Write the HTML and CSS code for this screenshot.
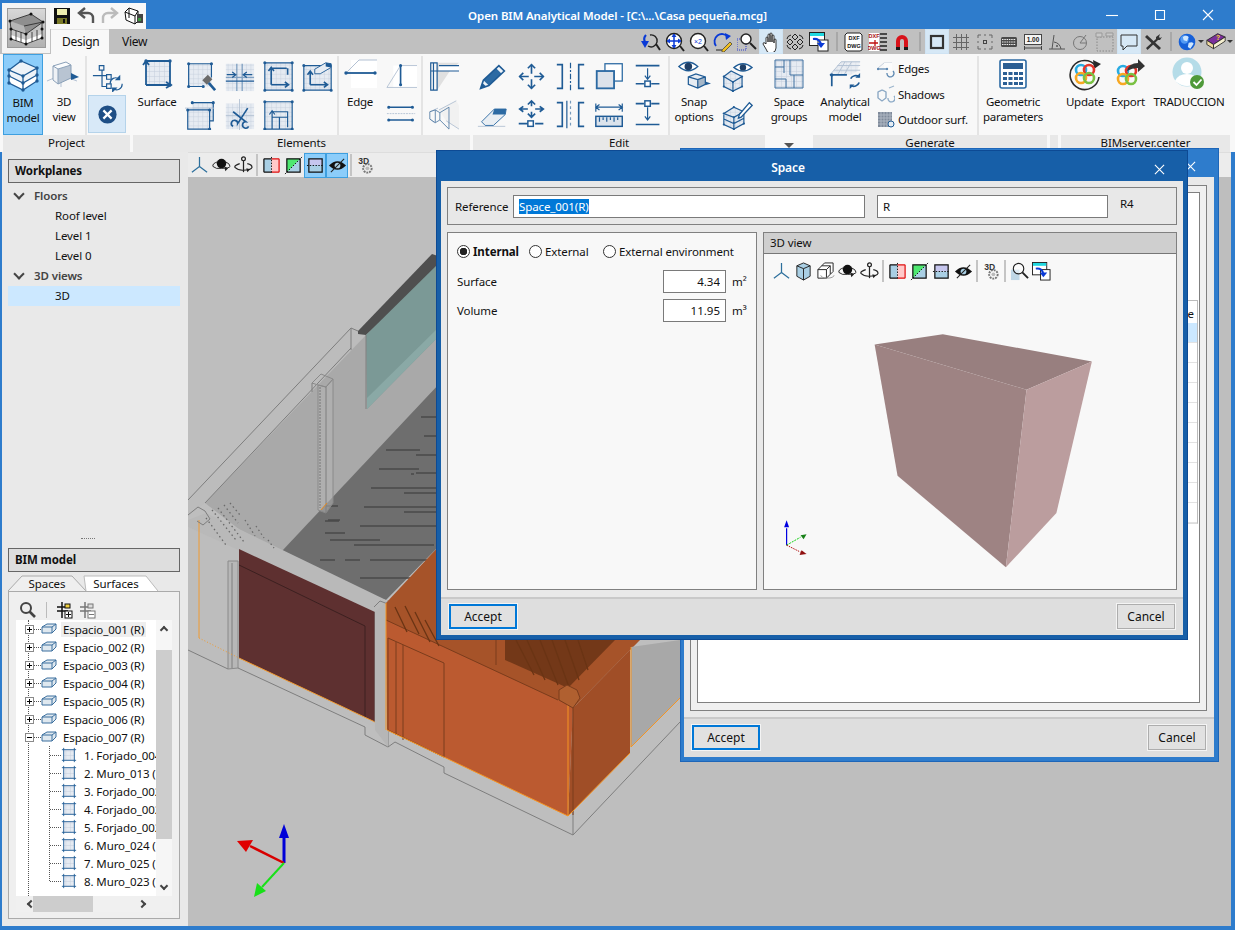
FILE: index.html
```html
<!DOCTYPE html>
<html lang="en">
<head>
    <meta charset="UTF-8">
    <title>Open BIM Analytical Model</title>
    <link rel="stylesheet" href="styles.css">
</head>
<body>
<svg class="sprite" aria-hidden="true">
    <defs>
        <pattern id="pg" width="5" height="5" patternUnits="userSpaceOnUse"><rect width="5" height="5" fill="#e6ebf2"/><path d="M5 0V5M0 5H5" stroke="#c4cedc" fill="none"/></pattern>

        <symbol id="a-house" viewBox="0 0 38 38"><path d="M2 12 23 5 35 13 18 25Z" fill="#8f8f8f"/><path d="M2 12 16 17 18 25 3 20Z" fill="#b5b5b5"/><path d="M3 20 18 25 34 20V29L18 35 3 30Z" fill="#c9c9c9"/><path d="M3 26 18 31 34 25V29L18 35 3 30Z" fill="#fff"/><path d="M2 12 23 5 35 13 18 25 3 20ZM3 20V30L18 35 34 29V14M18 25V35M16 17 35 13M8 22V32M13 23V33M24 23V33M29 21V31" fill="none" stroke="#222" stroke-width=".8"/><path d="M2 12h0M23 5h0M35 13h0M18 25h0M3 20h0M34 20h0M3 30h0M18 35h0M34 29h0" fill="none" stroke="#111" stroke-width="3" stroke-linecap="round"/></symbol>

        <!-- ribbon icons, 34 box -->
        <symbol id="r-bim" viewBox="0 0 34 34"><path d="M3 12 15 3l16 7v13L17 32 3 25Z" fill="#eef3f8"/><path d="M3 18l14 7 14-8v6L17 32 3 25Z" fill="#fff"/><path class="l" d="M3 12 15 3l16 7-14 8ZM3 12v13l14 7 14-9V10M17 18v14M3 18l14 7 14-8"/><path class="n" d="M3 12h0M15 3h0M31 10h0M17 18h0M3 18h0M17 25h0M31 17h0M3 25h0M17 32h0M31 23h0"/></symbol>
        <symbol id="r-3d" viewBox="0 0 34 34"><path class="t" d="M0 24 14 18l16 6M14 30 14 18"/><path d="M6 9 19 5v16l-8 6-5-4Z" fill="#eef1f5"/><path d="M11 12 24 8v13l-13 6Z" fill="#b8c4d2"/><path d="M6 9l5 3 13-4-5-3Z" fill="#fbfcfd"/><path d="M6 9l5 3 13-4-5-3ZM6 9v14l5 4V12M24 8v13l-13 6" fill="none" stroke="#8aa0b8"/><path d="M24 16l8 4-8 3Z" fill="#1f5b95"/></symbol>
        <symbol id="r-tree" viewBox="0 0 34 34"><path class="l" d="M8 5h5v5H8ZM16 15h5v5h-5ZM16 25h5v5h-5ZM1 16h15M11 10v18h5"/><path class="l" d="M20 25a6 6 0 0 1 10-5M33 25a6 6 0 0 1-10 5"/><path class="d" d="M31 15v6h-6ZM22 35v-6h6Z"/></symbol>
        <symbol id="r-close" viewBox="0 0 34 34"><circle cx="17" cy="17" r="10" fill="#1f4f86"/><path d="M12.500 12.500l9 9M21.500 12.500l-9 9" stroke="#fff" stroke-width="2.400" fill="none"/></symbol>
        <symbol id="r-surface" viewBox="0 0 34 34"><rect x="6" y="4" width="24" height="24" fill="url(#pg)"/><path class="l2" d="M6 28V4H30V28H6M3 8l3-4 3 4M26 25l5 3-5 3"/><path class="n" d="M6 4h0M30 4h0M30 28h0"/></symbol>
        <symbol id="r-paint" viewBox="0 0 34 34"><rect x="4" y="3" width="25" height="25" fill="url(#pg)"/><path class="l" d="M4 28V3H29V18M4 28H20"/><path class="n" d="M4 3h0M29 3h0M4 28h0M20 28h0"/><path d="M19 21l6-6 5 5-6 6Z" fill="#6b6b6b"/><path d="M26 24l7 8" stroke="#1f5b95" stroke-width="3" fill="none"/></symbol>
        <symbol id="r-merge" viewBox="0 0 34 34"><rect x="2" y="3" width="31" height="30" fill="url(#pg)"/><path class="l" d="M14 3v30M20 3v30M2 18h31" opacity=".5"/><path class="l" d="M3 15h9M9 12l4 3-4 3M31 15h-9M25 12l-4 3 4 3M2 22h31"/></symbol>
        <symbol id="r-inner" viewBox="0 0 34 34"><rect x="2" y="2" width="30" height="30" fill="url(#pg)"/><path class="l" d="M2 2H32V32H2Z"/><path class="l2" d="M9 26V8H26M9 26h18M6 11l3-4 3 4M24 23l4 3-4 3M27 8v7"/><path class="n" d="M2 2h0M32 2h0M32 32h0M2 32h0"/></symbol>
        <symbol id="r-inner2" viewBox="0 0 34 34"><rect x="2" y="5" width="30" height="27" fill="url(#pg)"/><path class="l" d="M2 5H32V32H2Z"/><path class="l2" d="M9 26V12M9 26h18M6 15l3-4 3 4M24 23l4 3-4 3"/><path d="M14 9 26 2l6 1v4L20 14h-6Z" fill="#e8edf3" stroke="#1f5b95"/><path d="M26 2l6 1v4l-6-1Z" fill="#1f5b95"/><path class="n" d="M2 5h0M32 32h0M2 32h0"/></symbol>
        <symbol id="r-copy" viewBox="0 0 34 34"><rect x="3" y="12" width="24" height="21" fill="url(#pg)"/><rect x="8" y="4" width="23" height="20" fill="url(#pg)"/><path class="l" d="M8 4h23v20H27M3 12h24v21H3Z"/><path class="t" d="M0 10h32"/><path class="n" d="M8 4h0M31 4h0M3 12h0M27 12h0M27 33h0"/></symbol>
        <symbol id="r-cut" viewBox="0 0 34 34"><rect x="2" y="5" width="31" height="28" fill="url(#pg)"/><path class="t" d="M17 0v34M2 18h31"/><path class="l2" d="M10 14l14 11a3.500 3.500 0 1 0 3 5M26 10 15 27a3.500 3.500 0 1 0-5 3"/></symbol>
        <symbol id="r-door" viewBox="0 0 34 34"><rect x="2" y="3" width="30" height="30" fill="url(#pg)"/><path class="l" d="M2 3H32V33H2Z"/><path class="l" d="M10 33V14H27V31M10 20H27M18 20V33"/><path class="l" d="M7 17l3-4 3 4"/><path class="n" d="M2 3h0M32 3h0M32 33h0M2 33h0"/></symbol>
        <symbol id="r-edge" viewBox="0 0 34 34"><rect x="8" y="3" width="26" height="28" fill="#fff"/><path class="t" d="M3 16 16 3h18"/><path class="l2" d="M3 16h29"/><path class="n" d="M3 16h0M32 16h0"/></symbol>
        <symbol id="r-edge2" viewBox="0 0 34 34"><rect x="8" y="5" width="26" height="24" fill="#fff"/><path class="t" d="M1 29 16 5h18M1 29h33"/><path class="l2" d="M16 5V26"/><path class="n" d="M16 5h0M16 26h0"/></symbol>
        <symbol id="r-edge3" viewBox="0 0 34 34"><path class="l2" d="M3 9H29M3 23H29"/><path class="n" d="M3 9h0M29 9h0M3 23h0M29 23h0"/><path class="t" d="M1 16H32" stroke-dasharray="2 1"/></symbol>
        <symbol id="r-wall" viewBox="0 0 34 34"><path d="M10 2h24L24 11 10 32Z" fill="#e0e0e0"/><path d="M12 5h22v6H12Z" fill="#fff"/><path class="l" d="M3 2h7v30H3ZM6 2v30M3 11h31M12 5h22"/></symbol>
        <symbol id="r-win" viewBox="0 0 34 34"><path d="M12 12 31 2l3 5v26L20 24Z" fill="#f1f1f1"/><path class="t" d="M2 14l9-4M2 22l5 4M12 12l19-10M20 24l14 9"/><path d="M2 14l6-2 5 3v8l-5 3-6-4ZM8 12v14M13 15l10-6v24L13 23" fill="none" stroke="#5b82a8"/></symbol>

        <symbol id="e-pencil" viewBox="0 0 34 34"><path d="M4 30l3-9L24 5l6 6-17 16Z" fill="#eef3f8"/><path d="M21 8l6 6-14 13-6-6Z" fill="#2c6aa3"/><path class="l2" d="M4 30l3-9L24 5l6 6-17 16Z"/><path class="d" d="M4 30l2-6 4 4Z"/></symbol>
        <symbol id="e-move" viewBox="0 0 34 34"><path class="l2" d="M17 4v10M17 20v10M4 17h10M20 17h10"/><path class="l2" d="M13 8l4-4 4 4M13 26l4 4 4-4M8 13l-4 4 4 4M26 13l4 4-4 4"/></symbol>
        <symbol id="e-mirror" viewBox="0 0 34 34"><path class="l2" d="M2 4h6v26H2M32 4h-6v26h6"/><path class="l" d="M17 2v30" stroke-dasharray="6 2 2 2"/></symbol>
        <symbol id="e-copy" viewBox="0 0 34 34"><rect x="12" y="3" width="19" height="19" fill="#fff" stroke="#2c6aa3" stroke-width="1.400"/><rect x="3" y="11" width="19" height="19" fill="#dce2ea" stroke="#2c6aa3" stroke-width="2"/></symbol>
        <symbol id="e-align" viewBox="0 0 34 34"><path class="l2" d="M3 5h26M3 25h9M20 25h9"/><path class="l" d="M16 8v12M13 16l3 4 3-4"/><rect x="13" y="22" width="6" height="6" fill="#fff" stroke="#1f5b95" stroke-width="1.600"/></symbol>
        <symbol id="e-eraser" viewBox="0 0 34 34"><path class="t" d="M1 30h30" stroke-width="3"/><path d="M5 25 19 11h13l-1 6-13 12H9Z" fill="#e9eef3" stroke="#2c6aa3"/><path d="M19 11h13l-1 6H17Z" fill="#2c6aa3"/></symbol>
        <symbol id="e-move2" viewBox="0 0 34 34"><path class="l2" d="M17 3v5M17 14v5M5 11h8M21 11h8M13 6l4-4 4 4M13 16l4 4 4-4M8 8l-4 3 4 3M26 8l4 3-4 3M3 27h10M21 27h9"/><rect x="13" y="24" width="6" height="6" fill="#fff" stroke="#1f5b95" stroke-width="1.600"/></symbol>
        <symbol id="e-mirror2" viewBox="0 0 34 34"><path class="l2" d="M2 4h6v26H2M32 4h-6v26h6"/><path class="l" d="M17 2v30" stroke-dasharray="3 3" opacity=".6"/><path class="l" d="M13 2v30"/></symbol>
        <symbol id="e-ruler" viewBox="0 0 34 34"><path class="l" d="M2 5v9M31 5v9M2 9h29M6 6l-4 3 4 3M27 6l4 3-4 3"/><rect x="2" y="19" width="29" height="11" fill="#dbe3ec" stroke="#1f5b95" stroke-width="1.600"/><path class="l" d="M6 20v5M10 20v3M14 20v5M18 20v3M22 20v5M26 20v3"/></symbol>
        <symbol id="e-align2" viewBox="0 0 34 34"><path class="l2" d="M3 5h9M20 5h9M3 28h26"/><path class="l" d="M16 9v14M13 19l3 4 3-4"/><rect x="13" y="2" width="6" height="6" fill="#fff" stroke="#1f5b95" stroke-width="1.600"/></symbol>

        <symbol id="s-eyecube" viewBox="0 0 36 34"><path d="M2 9q10-9 20 0-10 9-20 0Z" fill="#fff" stroke="#1f5b95" stroke-width="1.400"/><circle cx="12" cy="9" r="4" fill="#1f3f66"/><path d="M12 20l8-3 10 3v8l-8 4-10-4Z" fill="#e7ecf2"/><path d="M22 23l8-3v8l-8 4Z" fill="#a6b7c8"/><path class="l" d="M12 20l10 3 8-3M22 23v9M12 20v8l10 4 8-4v-8l-10-3Z"/><path class="d" d="M30 25l6 2-6 2Z"/></symbol>
        <symbol id="s-eyehouse" viewBox="0 0 34 34"><path d="M13 7q10-8 20 0-10 8-20 0Z" fill="#fff" stroke="#1f5b95" stroke-width="1.400"/><circle cx="23" cy="7" r="3.500" fill="#1f3f66"/><path d="M2 17l8-6 12 6v11l-10 5-10-5Z" fill="url(#pg)"/><path class="l" d="M2 17l8-6 12 6-10 6ZM2 17v11l10 5 10-5V17M12 23v10"/><path class="n1" d="M2 17h0M22 17h0M12 23h0M2 28h0M12 33h0M22 28h0"/></symbol>
        <symbol id="s-penhouse" viewBox="0 0 34 34"><path d="M2 16l11-7 11 5v13l-11 6-11-5Z" fill="url(#pg)"/><path class="l" d="M2 16l11-7 11 5-11 6ZM2 16v12l11 5 11-6V14M13 20v13M2 22l11 5 11-6"/><path class="n1" d="M2 16h0M13 9h0M24 14h0M13 20h0M2 28h0M13 33h0M24 27h0"/><path d="M19 17 30 4l3 3-12 13-3 1Z" fill="#fff" stroke="#1f5b95" stroke-width="1.500"/></symbol>
        <symbol id="s-plan" viewBox="0 0 34 34"><rect x="3" y="3" width="28" height="28" fill="url(#pg)"/><path d="M3 3H31V31H3ZM3 10h9V3M3 22h11v9M12 10v6M18 3v15h13M22 18v13" fill="none" stroke="#3c6f9f"/></symbol>
        <symbol id="s-ana" viewBox="0 0 36 34"><path d="M2 18 14 4h20l-3 10-7 4Z" fill="url(#pg)" opacity=".7"/><path class="t" d="M2 18 14 4h20M6 13h28M10 8h24M18 4 10 18M25 4 17 18"/><path class="l2" d="M2 18h18M4 18v12"/><path class="n" d="M4 18h0"/><path class="l2" d="M24 22a6 6 0 0 1 9-2M33 26a6 6 0 0 1-9 3"/><path class="d" d="M34 16v5h-5ZM23 33v-5h5Z"/></symbol>
        <symbol id="m-edges" viewBox="0 0 18 18" opacity=".7"><path class="t" d="M1 8l6-5h8"/><path d="M7 3h8v8H7Z" fill="#fff"/><path class="l" d="M1 9h9"/><path class="n1" d="M1 9h0M10 9h0"/><path class="l" d="M10 13a3.500 3.500 0 1 0 6-2"/></symbol>
        <symbol id="m-shadow" viewBox="0 0 18 18" opacity=".7"><path class="t" d="M1 7l5-2 3 2v6l-4 3-4-3Z"/><path class="l" d="M5 5l4 2v6l-4 3-4-3V7ZM12 3l5-2" opacity=".6"/><path class="l" d="M11 13a3.500 3.500 0 1 0 6-2" opacity=".7"/></symbol>
        <symbol id="m-out" viewBox="0 0 18 18"><rect x="1" y="1" width="14" height="15" fill="#7f8a9a"/><path d="M1 4h14M1 7h14M1 10h14M1 13h14M4 1v15M7 1v15M10 1v15M13 1v15" stroke="#aeb6c2" fill="none"/><circle cx="14" cy="13" r="3" fill="#e6edf4" stroke="#1f5b95"/></symbol>
        <symbol id="r-calc" viewBox="0 0 34 34"><rect x="4" y="3" width="26" height="28" rx="2" fill="#fff" stroke="#2c6aa3" stroke-width="1.600"/><rect x="7" y="6" width="20" height="6" fill="#2c5f94"/><path d="M7 15h4v3H7ZM12.500 15h4v3h-4ZM18 15h4v3h-4ZM23 15h4v3h-4ZM7 20h4v3H7ZM12.500 20h4v3h-4ZM18 20h4v3h-4ZM23 20h4v3h-4ZM7 25h4v3H7ZM12.500 25h4v3h-4ZM18 25h4v3h-4ZM23 25h4v3h-4Z" fill="#2c5f94"/></symbol>
        <g id="rings" fill="none" stroke-width="2.600"><circle cx="12" cy="11" r="5" stroke="#29abe2"/><circle cx="20" cy="11" r="5" stroke="#e6352b"/><circle cx="12" cy="19" r="5" stroke="#f7a823"/><circle cx="20" cy="19" r="5" stroke="#7ac143"/></g>
        <symbol id="b-update" viewBox="0 0 34 34"><path d="M28 9A14.500 14.500 0 1 0 31 20" fill="none" stroke="#2a2a2a" stroke-width="1.600"/><path d="M25 3l8 4-7 5Z" fill="#2a2a2a"/><use href="#rings" transform="translate(1 2)"/></symbol>
        <symbol id="b-export" viewBox="0 0 34 34"><use href="#rings" transform="translate(0 3)"/><path d="M16 14q2-8 11-8V2l7 7-7 6v-4q-6 0-11 3Z" fill="#333"/></symbol>
        <symbol id="b-user" viewBox="0 0 34 34"><circle cx="15" cy="15" r="14.500" fill="#b5dce8"/><circle cx="15" cy="11" r="6" fill="#fff"/><path d="M3 24q3-7 12-7t11 7q-5 5-11 5t-12-5Z" fill="#fff"/><circle cx="25" cy="25" r="7" fill="#4f9a3a"/><path d="M21.500 25l3 3 5-5.500" fill="none" stroke="#fff" stroke-width="1.800"/></symbol>

        <!-- toolbar icons, 20 box -->
        <symbol id="t-zprev" viewBox="0 0 20 20"><path d="M9 3a6 6 0 1 1-2 11" fill="none" stroke="#222" stroke-width="1.400"/><path d="M15 12l4 6" stroke="#222" stroke-width="2"/><path d="M5 3a6 6 0 0 0-1 7" fill="none" stroke="#0a3ad6" stroke-width="2.200"/><path d="M0 9h8l-4 7Z" fill="#0a3ad6"/></symbol>
        <symbol id="t-zall" viewBox="0 0 20 20"><circle cx="9" cy="9" r="7.500" fill="#fff" stroke="#222" stroke-width="1.400"/><path d="M15 14l4 5" stroke="#222" stroke-width="2"/><path d="M9 4v10M4 9h10" stroke="#0a3ad6" stroke-width="1.500"/><path d="M7 5l2-3 2 3M7 13l2 3 2-3M5 7 2 9l3 2M13 7l3 2-3 2" fill="#0a3ad6" stroke="#0a3ad6"/></symbol>
        <symbol id="t-zx2" viewBox="0 0 20 20"><circle cx="9" cy="9" r="7.500" fill="#fff" stroke="#222" stroke-width="1.400"/><path d="M15 14l4 5" stroke="#222" stroke-width="2"/><text x="9" y="12" class="tiny-b">×2</text></symbol>
        <symbol id="t-zred" viewBox="0 0 20 20"><path d="M3 14A7 7 0 1 1 15 5" fill="none" stroke="#0a3ad6" stroke-width="1.800"/><path d="M12 1l6 3-5 4Z" fill="#0a3ad6"/><path d="M9 18l8-8 2 2-8 8h-2Z" fill="#f0c020" stroke="#333" stroke-width=".7"/><path d="M3 18h6" stroke="#222"/></symbol>
        <symbol id="t-zwin" viewBox="0 0 20 20"><path d="M0 7h9v11H0Z" fill="none" stroke="#2a3ad0" stroke-dasharray="1 1"/><circle cx="9" cy="7" r="5" fill="#fff" stroke="#222" stroke-width="1.400"/><path d="M13 11l6 6" stroke="#222" stroke-width="2"/></symbol>
        <symbol id="t-hand" viewBox="0 0 20 20"><path d="M5 12V6a1 1 0 0 1 2 0v4-7a1 1 0 0 1 2 0v7-8a1 1 0 0 1 2 0v8-6a1 1 0 0 1 2 0v7-3a1 1 0 0 1 2 0v8q0 4-4 5H9q-3 0-4-4l-3-5q0-2 2-1Z" fill="#fff" stroke="#222" stroke-width=".9"/></symbol>
        <symbol id="t-orbit" viewBox="0 0 20 20"><path d="M10 2l3 3-3 3-3-3ZM10 12l3 3-3 3-3-3ZM2 10l3-3 3 3-3 3ZM18 10l-3-3-3 3 3 3Z" fill="none" stroke="#222"/><path d="M6 3Q2 4 2 7M14 3q4 1 4 4M2 13q0 3 4 4M18 13q0 3-4 4" stroke="#222" fill="none"/></symbol>
        <symbol id="t-winarrow" viewBox="0 0 20 20"><rect x=".5" y=".5" width="15" height="13" fill="#fff" stroke="#222"/><rect x="1" y="1" width="14" height="3" fill="#1fd8e0"/><rect x="9" y="8" width="10" height="11" fill="#fff" stroke="#222"/><path d="M4 7q7-1 8 6" stroke="#0a3ad6" stroke-width="2" fill="none"/><path d="M8 11h8l-4 5Z" fill="#0a3ad6"/></symbol>
        <symbol id="t-dxf" viewBox="0 0 20 20"><path d="M3 1h13l2 2v15l-2 1H3l-2-2V3Z" fill="#fff" stroke="#222"/><text x="10" y="8" class="tiny">DXF</text><text x="10" y="16" class="tiny">DWG</text></symbol>
        <symbol id="t-dxf2" viewBox="0 0 20 20"><path d="M1 1h10v18H1Z" fill="#fff"/><text x="6" y="6" class="tiny red">DXF</text><text x="6" y="18" class="tiny red">DWG</text><path d="M1 11h9M7 8v6" stroke="#c01010" stroke-width="1.300"/><path d="M12 2h7M12 6h7M12 10h7M12 14h7M12 18h7" stroke="#222" stroke-width="1.400"/></symbol>
        <symbol id="t-magnet" viewBox="0 0 20 20"><path d="M4 18V9a6 6 0 0 1 12 0v9h-4V9a2 2 0 0 0-4 0v9Z" fill="#d8121a"/><path d="M4 15h4v3H4ZM12 15h4v3h-4Z" fill="#1a1a1a"/></symbol>
        <symbol id="t-square" viewBox="0 0 20 20"><rect x="4" y="4" width="12" height="12" fill="none" stroke="#333" stroke-width="2.200"/></symbol>
        <symbol id="t-grid" viewBox="0 0 20 20"><path d="M5.500 2v16M10.500 2v16M15.500 2v16M2 5.500h16M2 10.500h16M2 15.500h16" stroke="#666" fill="none"/></symbol>
        <symbol id="t-dots" viewBox="0 0 20 20"><path d="M3 3h3M14 3h3M3 17h3M14 17h3M3 3v3M3 14v3M17 3v3M17 14v3M9 3h2M9 17h2M3 9v2M17 9v2" stroke="#666" fill="none"/><rect x="8.500" y="8.500" width="3" height="3" fill="none" stroke="#444"/></symbol>
        <symbol id="t-keys" viewBox="0 0 20 20"><rect x="2" y="5" width="16" height="10" rx="1.500" fill="#4a4a4a"/><path d="M3 7.500h14M3 10h14M3 12.500h14" stroke="#eee" stroke-dasharray="1.500 .8" fill="none"/></symbol>
        <symbol id="t-num" viewBox="0 0 20 20"><rect x="1.500" y="2.500" width="17" height="10" fill="#f4f4f4" stroke="#444"/><text x="10" y="10" class="tiny-n">1.00</text><path d="M1.500 14v4M18.500 14v4M1.500 16h17" stroke="#444" fill="none"/></symbol>
        <symbol id="t-angle" viewBox="0 0 20 20"><path d="M2 17h16M5 17 7 3M7 10q6 1 7 7" stroke="#555" fill="none"/><circle cx="10" cy="14" r="1" fill="#555"/></symbol>
        <symbol id="t-circ" viewBox="0 0 20 20"><circle cx="9" cy="11" r="6.500" fill="none" stroke="#777"/><path d="M9 11h6M9 11l6-8" stroke="#777" fill="none"/></symbol>
        <symbol id="t-dash" viewBox="0 0 20 20"><path d="M2 5h16v14H2Z" fill="none" stroke="#888" stroke-dasharray="1.500 1.500"/><path d="M1 1h6v4H1ZM11 1h7v3h-7Z" fill="#c8c8c8" stroke="#999"/></symbol>
        <symbol id="t-bubble" viewBox="0 0 20 20"><path d="M2 3h16v11H8l-4 4v-4H2Z" fill="none" stroke="#333"/></symbol>
        <symbol id="t-tools" viewBox="0 0 20 20"><path d="M4 3l14 13-2 2L2 5Z" fill="#333"/><path d="M17 2l-4 3v2l-10 9 1.500 2L15 8h2l2-3-2 1-1-1Z" fill="#333"/></symbol>
        <symbol id="t-globe" viewBox="0 0 24 24"><circle cx="12" cy="12" r="10" fill="#1660d8"/><circle cx="9" cy="9" r="5" fill="#6db4ff" opacity=".7"/><path d="M7 6q4-3 7 0l-2 5-4-1ZM14 13q5-2 6 1l-4 6-3-2Z" fill="#cfe7ff"/></symbol>
        <symbol id="t-book" viewBox="0 0 24 24"><path d="M1 10 14 2l9 4-14 9Z" fill="#7a2f9c" stroke="#222"/><path d="M1 10l8 5v5l-8-5Z" fill="#f0d9a0" stroke="#222"/><path d="M9 20l14-9V6L9 15Z" fill="#f6f0d0" stroke="#222"/><text x="12" y="10" class="tiny-y">?</text></symbol>

        <symbol id="q-save" viewBox="0 0 20 20"><path d="M2 2h16v16H2Z" fill="#111"/><rect x="5" y="3" width="10" height="6" fill="#f0f0b0"/><rect x="5" y="12" width="10" height="6" fill="#7a7a28"/><rect x="11" y="13" width="2" height="4" fill="#111"/></symbol>
        <symbol id="q-undo" viewBox="0 0 20 20"><path d="M4 7h8a5 5 0 0 1 5 5v5" fill="none" stroke="#555" stroke-width="2.400"/><path d="M9 2 3 7l6 5" fill="none" stroke="#555" stroke-width="2.400"/></symbol>
        <symbol id="q-redo" viewBox="0 0 20 20"><path d="M16 7H8a5 5 0 0 0-5 5v5" fill="none" stroke="#bbb" stroke-width="2.400"/><path d="M11 2l6 5-6 5" fill="none" stroke="#bbb" stroke-width="2.400"/></symbol>
        <symbol id="q-print" viewBox="0 0 20 20"><path d="M1 6l4-4 9 3v10l-3 3-9-4Z" fill="#fff" stroke="#111"/><path d="M5 2v10M1 6l10 4v8M11 10l3-5" stroke="#111" fill="none"/><path d="M13 8h6v9h-6Z" fill="#444"/><rect x="14" y="12" width="3" height="3" fill="#3c9a3c"/></symbol>

        <!-- view toolbar -->
        <symbol id="v-axes" viewBox="0 0 20 20"><path d="M10 1v10L2 17M10 11l8 6" stroke="#2c6f9c" stroke-width="1.300" fill="none"/></symbol>
        <symbol id="v-cube" viewBox="0 0 20 20"><path d="M3 4l7-3 7 3v11l-7 4-7-4Z" fill="#a9cfe4" stroke="#222"/><path d="M3 4l7 3 7-3M10 7v12" stroke="#222" fill="none"/></symbol>
        <symbol id="v-cubes" viewBox="0 0 20 20"><path d="M6 4l3-3h9v9l-3 3H6Z" fill="#fff" stroke="#222"/><path d="M2 8l4-4h9v9l-4 4H2Z" fill="#fff" stroke="#222"/><path d="M2 8h9v9M11 8l4-4" stroke="#222" fill="none"/><path d="M5 14a7 3 0 0 0 14 0" fill="none" stroke="#999"/></symbol>
        <symbol id="v-orbit" viewBox="0 0 20 20"><circle cx="10" cy="8" r="5" fill="#111"/><path d="M6 6Q0 8 1 11q3 3 9 2 8 0 9-2 0-3-5-5" fill="none" stroke="#222"/><path d="M13 11l4 2-3 3Z" fill="#222"/></symbol>
        <symbol id="v-orbit2" viewBox="0 0 20 20"><circle cx="10" cy="3" r="2" fill="none" stroke="#222" stroke-width="1.300"/><path d="M10 5v12" stroke="#222" stroke-width="1.300"/><path d="M6 8Q0 10 1 12q3 3 8 3 9 0 10-3 0-3-5-4" fill="none" stroke="#222" stroke-width="1.200"/><path d="M13 13l4 1-3 3Z" fill="#222"/></symbol>
        <symbol id="v-clipx" viewBox="0 0 20 20"><rect x="2" y="3" width="8" height="14" fill="#a9cfe4"/><rect x="10" y="3" width="8" height="14" fill="#ffc9c9"/><path d="M2 3v14M2 3h8M2 17h8" stroke="#111" stroke-width="1.300" fill="none"/><path d="M18 3v14M10 3h8M10 17h8" stroke="#e01010" stroke-width="1.300" fill="none"/><path d="M10 1v18" stroke="#111" stroke-dasharray="1.500 1.500"/></symbol>
        <symbol id="v-clipy" viewBox="0 0 20 20"><rect x="3" y="3" width="14" height="14" fill="#a9cfe4"/><path d="M3 3h14L3 17Z" fill="#4ee870"/><path d="M3 3h14v14H3Z" stroke="#111" stroke-width="1.300" fill="none"/><path d="M1 19 19 1" stroke="#111" stroke-dasharray="1.500 1.500"/></symbol>
        <symbol id="v-clipz" viewBox="0 0 20 20"><rect x="3" y="3" width="14" height="7" fill="#c6c6ee"/><rect x="3" y="10" width="14" height="7" fill="#a9cfe4"/><path d="M3 3h14v14H3Z" stroke="#111" stroke-width="1.300" fill="none"/><path d="M1 10h18" stroke="#111" stroke-dasharray="1.500 1.500"/></symbol>
        <symbol id="v-eye" viewBox="0 0 20 20"><path d="M1 10q9-9 18 0-9 9-18 0Z" fill="#111"/><circle cx="10" cy="10" r="3" fill="#a9cfe4"/><path d="M3 17 17 3" stroke="#222" stroke-width="1.100"/></symbol>
        <symbol id="v-3d" viewBox="0 0 20 20"><text x="8" y="8.500" class="tiny-3">3D</text><circle cx="12" cy="13" r="4.500" fill="none" stroke="#777" stroke-width="2" stroke-dasharray="2 1"/><circle cx="12" cy="13" r="2" fill="#bbb"/></symbol>
        <symbol id="v-zoom" viewBox="0 0 20 20"><rect x="1" y="8" width="9" height="11" fill="#bfd7e6"/><circle cx="9" cy="7" r="5.500" fill="#fff" fill-opacity=".5" stroke="#222" stroke-width="1.200"/><path d="M13 11l6 6" stroke="#222" stroke-width="2"/></symbol>

        <symbol id="space" viewBox="0 0 16 16"><path d="M1 6l5-3h9v5l-4 4H1Z" fill="#dfe8ef" stroke="#3b6f9e"/><path d="M1 6h10v6M11 6l4-3" fill="none" stroke="#3b6f9e"/></symbol>
        <symbol id="wallico" viewBox="0 0 16 18"><rect x="2" y="3" width="12" height="12" fill="url(#pg)"/><path d="M2 1v16M14 1v16M0 3h16M0 15h16" stroke="#1f5b95" fill="none"/></symbol>
        <symbol id="zoom" viewBox="0 0 18 18"><circle cx="7" cy="7" r="5" fill="none" stroke="#444" stroke-width="2"/><path d="M10.500 10.500 16 16" stroke="#444" stroke-width="2.600"/></symbol>
        <symbol id="plus1" viewBox="0 0 18 18"><path d="M6 1v16M1 6h11M1 10h11" stroke="#111" stroke-width="1.500" fill="none"/><rect x="9" y="3" width="5" height="4" fill="#f0d040" stroke="#111"/><rect x="9" y="10" width="7" height="7" fill="#fff" stroke="#111"/><path d="M12.500 11v5M10 13.500h5" stroke="#111"/></symbol>
        <symbol id="plus2" viewBox="0 0 18 18"><path d="M6 1v16M1 6h11M1 10h11" stroke="#777" stroke-width="1.500" fill="none"/><rect x="9" y="3" width="5" height="4" fill="#ddd" stroke="#777"/><rect x="9" y="10" width="7" height="7" fill="#fff" stroke="#777"/><path d="M10 13.500h5" stroke="#777"/></symbol>
    </defs>
</svg>

<div class="app">
    <div class="app-button"><div class="app-logo"><svg class="i38"><use href="#a-house"/></svg></div></div>

    <header class="titlebar">
        <div class="qat">
            <svg class="i20"><use href="#q-save"/></svg>
            <svg class="i20"><use href="#q-undo"/></svg>
            <svg class="i20"><use href="#q-redo"/></svg>
            <svg class="i20"><use href="#q-print"/></svg>
        </div>
        <div class="title">Open BIM Analytical Model - [C:\...\Casa pequeña.mcg]</div>
        <div class="winctl">
            <svg viewBox="0 0 12 12"><path d="M0 6.500h12"/></svg>
            <svg viewBox="0 0 12 12"><path d="M1.500 1.500h9v9h-9Z"/></svg>
            <svg viewBox="0 0 12 12"><path d="M1 1l10 10M11 1 1 11"/></svg>
        </div>
    </header>

    <div class="tabrow">
        <div class="tab active">Design</div>
        <div class="tab">View</div>
        <div class="topbar">
            <span class="tb"><svg class="i20"><use href="#t-zprev"/></svg></span>
            <span class="tb"><svg class="i20"><use href="#t-zall"/></svg></span>
            <span class="tb"><svg class="i20"><use href="#t-zx2"/></svg></span>
            <span class="tb"><svg class="i20"><use href="#t-zred"/></svg></span>
            <span class="tb"><svg class="i20"><use href="#t-zwin"/></svg></span>
            <span class="tb on"><svg class="i20"><use href="#t-hand"/></svg></span>
            <span class="tb"><svg class="i20"><use href="#t-orbit"/></svg></span>
            <span class="tb"><svg class="i20"><use href="#t-winarrow"/></svg></span>
            <i class="tbsep"></i>
            <span class="tb"><svg class="i20"><use href="#t-dxf"/></svg></span>
            <span class="tb"><svg class="i20"><use href="#t-dxf2"/></svg></span>
            <span class="tb"><svg class="i20"><use href="#t-magnet"/></svg></span>
            <i class="tbsep"></i>
            <span class="tb on"><svg class="i20"><use href="#t-square"/></svg></span>
            <span class="tb"><svg class="i20"><use href="#t-grid"/></svg></span>
            <span class="tb"><svg class="i20"><use href="#t-dots"/></svg></span>
            <span class="tb"><svg class="i20"><use href="#t-keys"/></svg></span>
            <span class="tb"><svg class="i20"><use href="#t-num"/></svg></span>
            <span class="tb"><svg class="i20"><use href="#t-angle"/></svg></span>
            <span class="tb"><svg class="i20"><use href="#t-circ"/></svg></span>
            <span class="tb"><svg class="i20"><use href="#t-dash"/></svg></span>
            <span class="tb on"><svg class="i20"><use href="#t-bubble"/></svg></span>
            <span class="tb"><svg class="i20"><use href="#t-tools"/></svg></span>
            <i class="tbsep"></i>
            <span class="tb wide"><svg class="i20"><use href="#t-globe"/></svg><b class="caret"></b></span>
            <span class="tb wide"><svg class="i20"><use href="#t-book"/></svg><b class="caret"></b></span>
        </div>
    </div>

    <div class="ribbon">
        <section class="grp g-project">
            <div class="grp-body">
                <div class="cell big on w40"><svg class="i34"><use href="#r-bim"/></svg><span>BIM<br>model</span></div>
                <div class="cell w42"><svg class="i34"><use href="#r-3d"/></svg><span>3D<br>view</span></div>
                <i class="vsep"></i>
                <div class="col w40">
                    <div class="slot"><svg class="i34"><use href="#r-tree"/></svg></div>
                    <div class="slot pressed"><svg class="i34"><use href="#r-close"/></svg></div>
                </div>
            </div>
            <div class="grp-foot">Project</div>
        </section>
        <section class="grp g-elements">
            <div class="grp-body">
                <div class="cell w48"><svg class="i34"><use href="#r-surface"/></svg><span>Surface</span></div>
                <div class="col w39"><div class="slot"><svg class="i34"><use href="#r-paint"/></svg></div><div class="slot"><svg class="i34"><use href="#r-copy"/></svg></div></div>
                <div class="col w39"><div class="slot"><svg class="i34"><use href="#r-merge"/></svg></div><div class="slot"><svg class="i34"><use href="#r-cut"/></svg></div></div>
                <div class="col w39"><div class="slot"><svg class="i34"><use href="#r-inner"/></svg></div><div class="slot"><svg class="i34"><use href="#r-door"/></svg></div></div>
                <div class="col w39"><div class="slot"><svg class="i34"><use href="#r-inner2"/></svg></div></div>
                <i class="vsep"></i>
                <div class="cell w42"><svg class="i34"><use href="#r-edge"/></svg><span>Edge</span></div>
                <div class="col w40"><div class="slot"><svg class="i34"><use href="#r-edge2"/></svg></div><div class="slot"><svg class="i34"><use href="#r-edge3"/></svg></div></div>
                <i class="vsep"></i>
                <div class="col w40"><div class="slot"><svg class="i34"><use href="#r-wall"/></svg></div><div class="slot"><svg class="i34"><use href="#r-win"/></svg></div></div>
            </div>
            <div class="grp-foot">Elements</div>
        </section>
        <section class="grp g-edit">
            <div class="grp-body">
                <div class="col w39"><div class="slot"><svg class="i34"><use href="#e-pencil"/></svg></div><div class="slot"><svg class="i34"><use href="#e-eraser"/></svg></div></div>
                <div class="col w39"><div class="slot"><svg class="i34"><use href="#e-move"/></svg></div><div class="slot"><svg class="i34"><use href="#e-move2"/></svg></div></div>
                <div class="col w39"><div class="slot"><svg class="i34"><use href="#e-mirror"/></svg></div><div class="slot"><svg class="i34"><use href="#e-mirror2"/></svg></div></div>
                <div class="col w39"><div class="slot"><svg class="i34"><use href="#e-copy"/></svg></div><div class="slot"><svg class="i34"><use href="#e-ruler"/></svg></div></div>
                <div class="col w39"><div class="slot"><svg class="i34"><use href="#e-align"/></svg></div><div class="slot"><svg class="i34"><use href="#e-align2"/></svg></div></div>
                <i class="vsep"></i>
                <div class="cell w48"><svg class="i34"><use href="#s-eyecube"/></svg><span>Snap<br>options</span></div>
                <div class="col w39"><div class="slot"><svg class="i34"><use href="#s-eyehouse"/></svg></div><div class="slot"><svg class="i34"><use href="#s-penhouse"/></svg></div></div>
            </div>
            <div class="grp-foot">Edit</div>
        </section>
        <section class="grp g-space">
            <div class="grp-body">
                <div class="cell w42"><svg class="i34"><use href="#s-plan"/></svg><span>Space<br>groups</span></div>
            </div>
            <div class="grp-foot plain"><b class="caret big"></b></div>
        </section>
        <section class="grp g-generate">
            <div class="grp-body">
                <div class="cell w64"><svg class="i34"><use href="#s-ana"/></svg><span>Analytical<br>model</span></div>
                <div class="minis">
                    <div class="mini"><svg class="i18"><use href="#m-edges"/></svg>Edges</div>
                    <div class="mini"><svg class="i18"><use href="#m-shadow"/></svg>Shadows</div>
                    <div class="mini"><svg class="i18"><use href="#m-out"/></svg>Outdoor surf.</div>
                </div>
                <i class="vsep"></i>
                <div class="cell w68"><svg class="i34"><use href="#r-calc"/></svg><span>Geometric<br>parameters</span></div>
            </div>
            <div class="grp-foot">Generate</div>
        </section>
        <section class="grp g-stub">
            <div class="grp-body"></div>
            <div class="grp-foot"></div>
        </section>
        <section class="grp g-bim">
            <div class="grp-body">
                <div class="cell w44 first"><svg class="i34"><use href="#b-update"/></svg><span>Update</span></div>
                <div class="cell w42"><svg class="i34"><use href="#b-export"/></svg><span>Export</span></div>
                <div class="cell w80"><svg class="i34"><use href="#b-user"/></svg><span>TRADUCCION</span></div>
            </div>
            <div class="grp-foot">BIMserver.center</div>
        </section>
    </div>

    <div class="workspace">
        <aside class="sidebar">
            <div class="side-head">Workplanes</div>
            <ul class="planes">
                <li class="group"><i class="chev"></i>Floors</li>
                <li>Roof level</li>
                <li>Level 1</li>
                <li>Level 0</li>
                <li class="group"><i class="chev"></i>3D views</li>
                <li class="sel">3D</li>
            </ul>
            <div class="grip"></div>
            <div class="side-head">BIM model</div>
            <div class="side-tabs">
                <div class="stab s1"><svg viewBox="0 0 78 16" preserveAspectRatio="none"><path d="M0 16 14 1h50l14 15" fill="#efefef" stroke="#aaa"/></svg><span>Spaces</span></div>
                <div class="stab s2"><svg viewBox="0 0 78 16" preserveAspectRatio="none"><path d="M6 16 4 1h62l12 15" fill="#fff" stroke="#bbb"/></svg><span>Surfaces</span></div>
            </div>
            <div class="side-panel">
                <div class="side-tools">
                    <svg class="i18"><use href="#zoom"/></svg>
                    <i class="tool-sep"></i>
                    <svg class="i18"><use href="#plus1"/></svg>
                    <svg class="i18"><use href="#plus2"/></svg>
                </div>
                <div class="tree-box">
                    <div class="tree-main">
                        <div class="tree-clip">
                            <div class="tree-list">
                                <div class="node"><i class="exp"></i><i class="dash"></i><svg class="i16"><use href="#space"/></svg><span class="hot">Espacio_001 (R)</span></div>
                                <div class="node"><i class="exp"></i><i class="dash"></i><svg class="i16"><use href="#space"/></svg><span>Espacio_002 (R)</span></div>
                                <div class="node"><i class="exp"></i><i class="dash"></i><svg class="i16"><use href="#space"/></svg><span>Espacio_003 (R)</span></div>
                                <div class="node"><i class="exp"></i><i class="dash"></i><svg class="i16"><use href="#space"/></svg><span>Espacio_004 (R)</span></div>
                                <div class="node"><i class="exp"></i><i class="dash"></i><svg class="i16"><use href="#space"/></svg><span>Espacio_005 (R)</span></div>
                                <div class="node"><i class="exp"></i><i class="dash"></i><svg class="i16"><use href="#space"/></svg><span>Espacio_006 (R)</span></div>
                                <div class="node"><i class="exp open"></i><i class="dash"></i><svg class="i16"><use href="#space"/></svg><span>Espacio_007 (R)</span></div>
                                <div class="tree-sub">
                                    <div class="leaf"><i class="dash long"></i><svg class="i16"><use href="#wallico"/></svg><span>1. Forjado_004 (R)</span></div>
                                    <div class="leaf"><i class="dash long"></i><svg class="i16"><use href="#wallico"/></svg><span>2. Muro_013 (R)</span></div>
                                    <div class="leaf"><i class="dash long"></i><svg class="i16"><use href="#wallico"/></svg><span>3. Forjado_002 (R)</span></div>
                                    <div class="leaf"><i class="dash long"></i><svg class="i16"><use href="#wallico"/></svg><span>4. Forjado_002 (R)</span></div>
                                    <div class="leaf"><i class="dash long"></i><svg class="i16"><use href="#wallico"/></svg><span>5. Forjado_002 (R)</span></div>
                                    <div class="leaf"><i class="dash long"></i><svg class="i16"><use href="#wallico"/></svg><span>6. Muro_024 (R)</span></div>
                                    <div class="leaf"><i class="dash long"></i><svg class="i16"><use href="#wallico"/></svg><span>7. Muro_025 (R)</span></div>
                                    <div class="leaf"><i class="dash long"></i><svg class="i16"><use href="#wallico"/></svg><span>8. Muro_023 (R)</span></div>
                                </div>
                            </div>
                        </div>
                        <div class="vscroll"><i class="arr up"></i><div class="vthumb"></div><i class="arr down"></i></div>
                    </div>
                    <div class="hscroll"><i class="arr left"></i><div class="hthumb"></div><i class="arr right"></i></div>
                </div>
            </div>
        </aside>

        <main class="view">
            <div class="viewbar">
                <span class="vb"><svg class="i20"><use href="#v-axes"/></svg></span>
                <span class="vb"><svg class="i20"><use href="#v-orbit"/></svg></span>
                <span class="vb"><svg class="i20"><use href="#v-orbit2"/></svg></span>
                <i class="vbsep"></i>
                <span class="vb"><svg class="i20"><use href="#v-clipx"/></svg></span>
                <span class="vb"><svg class="i20"><use href="#v-clipy"/></svg></span>
                <span class="vb on"><svg class="i20"><use href="#v-clipz"/></svg></span>
                <span class="vb on"><svg class="i20"><use href="#v-eye"/></svg></span>
                <i class="vbsep"></i>
                <span class="vb"><svg class="i20"><use href="#v-3d"/></svg></span>
            </div>
            <svg class="scene" viewBox="188 177 1043 749">
                <!-- parapet, inner wall and slab -->
                <path d="M188 500 351 328 358 331 440 252V270L366 335 205 503 188 516Z" fill="#bcbcbc"/>
                <path d="M205 503 366 335 440 258V385L281 552 240 530Z" fill="#a9a9a9"/>
                <path d="M188 500 351 328 358 331M205 503 351 348M351 328V350" class="wire"/>
                <path d="M358 331 432 254l6 2 2 10-74 69-8-1Z" fill="#4f4f4f"/>
                <path d="M366 335 440 262V335L367 409Z" fill="#7b9996"/>
                <path d="M367 398 440 326V335L367 409Z" fill="#8aa9a6"/>
                <path d="M366 335V409" class="wire"/>
                <path d="M281 552 440 383V545L386 600 375 597Z" fill="#6e6e6e"/>
                <g class="hatch">
                    <path d="M421 417h15M424 436h15M386 450h34M416 455h8M423 455h13M379 469h40M411 474h3M416 473h20M371 488h66M404 493h33M364 507h72M404 512h32"/>
                    <path d="M326 506h12M325 521h14M328 520h12M325 533h20M360 526h76M354 545h80M370 560h65M360 578h75M330 540h50M320 560h15M345 560h15"/>
                </g>
                <!-- column -->
                <path d="M318 385V510l8 3 7-10V379l-7 8Z" fill="#b5b5b5" fill-opacity=".55" stroke="#8a8a8a"/>
                <path d="M312 383l9-9 12 5-7 8-8-2Z" fill="none" stroke="#8a8a8a"/>
                <path d="M312 383V392M326 387V513" class="wire"/>
                <path d="M320 387V508" stroke="#777" stroke-dasharray="2 1" fill="none"/>
                <path d="M321 510l6-7" stroke="#e88a1c" fill="none"/>
                <!-- front strip and wall -->
                <path d="M188 520 206 513 386 600 384 620 188 527Z" fill="#b9b9b9"/>
                <path d="M188 527 375 612V727L188 650Z" fill="#bdbdbd"/>
                <path d="M239 549 375 612V722L239 658Z" fill="#5e3030"/>
                <path d="M239 565 365 626V717" fill="none" stroke="#3c2020"/>
                <path d="M228 561h10V668l-10 1Z" fill="#b7b7b7" stroke="#8a8a8a"/>
                <path d="M232 563V668" class="wire"/>
                <path d="M199 520V638" stroke="#f09a30" fill="none"/>
                <path d="M199 638l40 20" stroke="#f09a30" stroke-dasharray="1 2" fill="none"/>
                <path d="M239 658l136 64" stroke="#f09a30" fill="none"/>
                <path d="M188 650 228 669M238 668 365 727V735L388 747 395 742 444 767V773L573 835 680 722" class="wire"/>
                <path d="M375 612V722M388 600V747M573 708V835" class="wire"/>
                <path d="M375 612V730L388 747V600Z" fill="#b6b6b6"/>
                <path d="M188 515l10-8 7 4 5 8-7 6-6-4M374 607l6-6 8 3v12" class="wire"/>
                <g class="dots">
                    <path d="M212 510 236 540M218 508 244 542M206 518 226 545M224 505l14 18M230 503l10 12M245 520l10 16M256 526l8 12M268 540l6 8"/>
                </g>
                <!-- orange walls -->
                <path d="M386 603 440 545 640 640 573 708 558 705 386 625Z" fill="#a65329"/>
                <path d="M505 640H615L568 688 505 660Z" fill="#733818"/>
                <path d="M386 620 558 700 573 708 568 816 387 730Z" fill="#bb5a30"/>
                <path d="M573 708 630 650V753L568 816Z" fill="#a04e27"/>
                <path d="M631 647 680 640V698L631 747Z" fill="#a8a8a8"/>
                <path d="M388 638 444 663V757L388 730ZM396 642V735M403 645V740" fill="none" stroke="#7a3c1c"/>
                <path d="M386 620 558 700M496 640V665" stroke="#7a3c1c" fill="none"/>
                <path d="M573 708V815" stroke="#7a3c1c" fill="none"/>
                <path d="M387 730 568 816 630 753M568 700V816M631 647V747M631 747 680 698M386 603V730" stroke="#f59422" fill="none"/>
                <g class="hatch warm">
                    <path d="M395 607l12 25M405 606l14 28M415 612l15 30M425 620l14 26M516 640l18 35M527 640l18 40M540 640l18 45M552 640l18 50M565 640l14 40M578 640l10 30"/>
                </g>
                <path d="M559 690l8-5 10 5 3 8-7 10-14-8Z" fill="#b06030" stroke="#7a3c1c"/>
                <!-- axes -->
                <path d="M284 863V834" stroke="#0000d8" stroke-width="3" fill="none"/>
                <path d="M284 824l5 14h-10Z" fill="#0000d8"/>
                <path d="M284 863 250 846" stroke="#d80000" stroke-width="2.500" fill="none"/>
                <path d="M237 841l16-1-7 12Z" fill="#e00000"/>
                <path d="M284 863 262 887" stroke="#18e018" stroke-width="2" fill="none"/>
                <path d="M254 897l3-14 9 8Z" fill="#18e018"/>
            </svg>
        </main>
    </div>

    <div class="dlg back">
        <div class="dlg-title"><span>&nbsp;</span><svg viewBox="0 0 12 12"><path d="M1 1l10 10M11 1 1 11"/></svg></div>
        <div class="dlg-body">
            <div class="back-frame">
                <div class="back-list">
                    <div class="grid-table">
                        <div class="gt-head">Name</div>
                        <div class="gt-row hi"></div>
                        <div class="gt-row"></div><div class="gt-row"></div><div class="gt-row"></div><div class="gt-row"></div>
                        <div class="gt-row"></div><div class="gt-row"></div><div class="gt-row"></div><div class="gt-row"></div><div class="gt-row"></div>
                    </div>
                </div>
            </div>
            <div class="dlg-foot"><button class="btn main">Accept</button><button class="btn">Cancel</button></div>
        </div>
    </div>

    <div class="dlg front">
        <div class="dlg-title"><span>Space</span><svg viewBox="0 0 12 12"><path d="M1 1l10 10M11 1 1 11"/></svg></div>
        <div class="dlg-body">
            <div class="refrow">
                <label>Reference</label>
                <div class="field ref"><span class="selected">Space_001(R)</span></div>
                <input class="field abbr" type="text" value="R">
                <span class="code">R4</span>
            </div>
            <div class="mainrow">
                <div class="props">
                    <div class="radios">
                        <label class="rad bold r1"><input type="radio" name="kind" checked>Internal</label>
                        <label class="rad r2"><input type="radio" name="kind">External</label>
                        <label class="rad"><input type="radio" name="kind">External environment</label>
                    </div>
                    <div class="prop"><span>Surface</span><input type="text" value="4.34"><em>m²</em></div>
                    <div class="prop"><span>Volume</span><input type="text" value="11.95"><em>m³</em></div>
                </div>
                <div class="preview">
                    <div class="prev-head">3D view</div>
                    <div class="prev-bar">
                        <span class="vb"><svg class="i20"><use href="#v-axes"/></svg></span>
                        <span class="vb"><svg class="i20"><use href="#v-cube"/></svg></span>
                        <span class="vb"><svg class="i20"><use href="#v-cubes"/></svg></span>
                        <span class="vb"><svg class="i20"><use href="#v-orbit"/></svg></span>
                        <span class="vb"><svg class="i20"><use href="#v-orbit2"/></svg></span>
                        <i class="vbsep"></i>
                        <span class="vb"><svg class="i20"><use href="#v-clipx"/></svg></span>
                        <span class="vb"><svg class="i20"><use href="#v-clipy"/></svg></span>
                        <span class="vb"><svg class="i20"><use href="#v-clipz"/></svg></span>
                        <span class="vb"><svg class="i20"><use href="#v-eye"/></svg></span>
                        <i class="vbsep"></i>
                        <span class="vb"><svg class="i20"><use href="#v-3d"/></svg></span>
                        <i class="vbsep"></i>
                        <span class="vb"><svg class="i20"><use href="#v-zoom"/></svg></span>
                        <span class="vb"><svg class="i20"><use href="#t-winarrow"/></svg></span>
                    </div>
                    <svg class="box3d" viewBox="764 287 412 302">
                        <path d="M874.300 343.700 942.700 333.300 1092.300 360.700 1026.700 389Z" fill="#987f7f"/>
                        <path d="M874.300 343.700 1026.700 389 1006 567.300 897.300 475.300Z" fill="#9e8383"/>
                        <path d="M1026.700 389 1092.300 360.700 1056.700 512.700 1006 567.300Z" fill="#bb9d9e"/>
                        <path d="M786 545V528" stroke="#0000e0" stroke-width="1.200"/>
                        <path d="M786 520l2.500 7h-5Z" fill="#0000e0"/>
                        <path d="M786 545 800 537" stroke="#10d010" stroke-dasharray="2 1"/>
                        <path d="M806 534l-3 5-3-4Z" fill="#188018"/>
                        <path d="M786 545l14 7" stroke="#b01010" stroke-dasharray="1.500 1"/>
                        <path d="M806 554l-7 1 2-5Z" fill="#901010"/>
                    </svg>
                </div>
            </div>
            <div class="dlg-foot"><button class="btn main">Accept</button><button class="btn">Cancel</button></div>
        </div>
    </div>
</div>
</body>
</html>
```

FILE: styles.css
```css
* {
    box-sizing: border-box;
}

body {
    margin: 0;
    font-family: "Noto Sans", "Open Sans", sans-serif;
    font-size: 11.5px;
    letter-spacing: -0.1px;
    color: #111;
    background: #2e7ccc;
}

.sprite {
    position: absolute;
    width: 0;
    height: 0;
}

/* svg helper classes */
.l { fill: none; stroke: #1f5b95; stroke-width: 1.3; }
.l2 { fill: none; stroke: #1f5b95; stroke-width: 1.8; }
.t { fill: none; stroke: #b3c1d3; stroke-width: 1; }
.n { fill: none; stroke: #1f5b95; stroke-width: 3.4; stroke-linecap: round; }
.n1 { fill: none; stroke: #1f5b95; stroke-width: 2.4; stroke-linecap: round; }
.d { fill: #1f5b95; }
.tiny { font: bold 5.500px "Liberation Sans", sans-serif; letter-spacing: 0; text-anchor: middle; fill: #111; }
.tiny.red { fill: #a81010; }
.tiny-b { font: 7px "Liberation Sans", sans-serif; letter-spacing: 0; text-anchor: middle; fill: #0a3ad6; }
.tiny-n { font: bold 6.500px "Liberation Sans", sans-serif; letter-spacing: 0; text-anchor: middle; fill: #222; }
.tiny-y { font: bold 8px "Liberation Sans", sans-serif; letter-spacing: 0; fill: #f5e020; }
.tiny-3 { font: bold 9px "Liberation Sans", sans-serif; letter-spacing: 0; text-anchor: middle; fill: #333; }
.i16 { width: 16px; height: 16px; flex: none; }
.i18 { width: 18px; height: 18px; flex: none; }
.i20 { width: 20px; height: 20px; flex: none; display: block; }
.i34 { width: 34px; height: 34px; flex: none; display: block; }
.i38 { width: 38px; height: 38px; flex: none; display: block; }

.app {
    position: relative;
    width: 1235px;
    height: 930px;
    overflow: hidden;
    display: flex;
    flex-direction: column;
    background: #2e7ccc;
}

.app-button {
    position: absolute;
    left: 2px;
    top: 3px;
    width: 48px;
    height: 50px;
    background: #f4f4f4;
    padding: 5px;
    z-index: 3;
}

.app-logo {
    width: 39px;
    height: 40px;
    background: linear-gradient(#d8d8d8, #b0b0b0);
    border: 1px solid #999;
    display: flex;
    align-items: center;
    justify-content: center;
}

/* title bar */
.titlebar {
    height: 29px;
    display: grid;
    grid-template-columns: 1fr auto 1fr;
    align-items: center;
}

.qat {
    margin: 3px 0 0 50px;
    width: 96px;
    height: 26px;
    background: #f8f8f8;
    display: flex;
    align-items: center;
}

.qat svg {
    margin: 0 2px;
}

.title {
    color: #fff;
    font-weight: 600;
    font-size: 11.5px;
    padding-top: 2px;
}

.winctl {
    display: flex;
    justify-content: flex-end;
    gap: 36px;
    padding-right: 21px;
}

.winctl svg {
    width: 12px;
    height: 12px;
    fill: none;
    stroke: #fff;
    stroke-width: 1.1;
}

/* tabs and top toolbar */
.tabrow {
    height: 25px;
    background: #c0c0c0;
    display: flex;
    padding-left: 51px;
}

.tab {
    line-height: 25px;
    padding: 0 13px;
    font-size: 12px;
    letter-spacing: -0.3px;
}

.tab.active {
    width: 58px;
    background: #f8f8f8;
    border-top: 1px solid #e4e4e4;
    padding-left: 11px;
    line-height: 24px;
}

.topbar {
    margin-left: auto;
    display: flex;
    padding-right: 1px;
}

.tb {
    width: 24px;
    height: 25px;
    display: flex;
    align-items: center;
    justify-content: center;
}

.tb.on {
    background: #d6e8f6;
    outline: 1px solid #cfe3f3;
    outline-offset: -1px;
}

.tb.wide {
    width: 29px;
}

.tbsep {
    width: 11px;
    margin: 3px 0;
    flex: none;
    background: linear-gradient(#a8a8a8, #a8a8a8) center / 2px 100% no-repeat;
}

.caret {
    width: 0;
    height: 0;
    border: 3px solid transparent;
    border-top: 3px solid #333;
    border-bottom: 0;
    margin-left: 1px;
}

.caret.big {
    border-width: 5px 5px 0;
    border-top-color: #555;
    margin: 0;
}

/* ribbon */
.ribbon {
    height: 98px;
    background: #f8f8f8;
    display: flex;
    padding-left: 3px;
}

.grp {
    display: flex;
    flex-direction: column;
    margin-right: 3px;
}

.g-project { width: 127px; }
.g-elements { width: 337px; }
.g-edit { width: 292px; }
.g-space { width: 42px; }
.g-generate { width: 234px; }
.g-stub { width: 8px; }
.g-bim { width: 169px; margin: 0; }

.grp-body {
    height: 81px;
    display: flex;
}

.grp-foot {
    height: 17px;
    background: #e8e8e8;
    text-align: center;
    line-height: 16px;
    font-size: 11.5px;
}

.grp-foot.plain {
    background: none;
    display: flex;
    align-items: flex-end;
    justify-content: center;
    padding-bottom: 4px;
}

.vsep {
    width: 2px;
    margin: 2px 0 0;
    background: #e4e4e4;
    flex: none;
}

.cell {
    display: flex;
    flex-direction: column;
    align-items: center;
    padding-top: 3px;
    line-height: 15px;
    text-align: center;
    font-size: 11.5px;
    letter-spacing: -0.25px;
    flex: none;
}

.cell svg {
    margin-bottom: 3px;
}

.cell.on {
    background: #8ccdfa;
    border: 1px solid #3e9fdf;
}

.cell.first {
    margin-left: 2px;
}

.col {
    flex: none;
    display: flex;
    flex-direction: column;
    align-items: center;
    padding-top: 3px;
}

.slot {
    width: 38px;
    height: 38px;
    display: flex;
    align-items: center;
    justify-content: center;
}

.slot svg {
    width: 31px;
    height: 31px;
}

.slot.pressed {
    background: #d8e9f8;
    border: 1px solid #b5d3ea;
}

.w39 { width: 39px; }
.w40 { width: 40px; }
.w42 { width: 42px; }
.w44 { width: 44px; }
.w48 { width: 48px; }
.w64 { width: 64px; }
.w68 { width: 68px; }
.w80 { width: 80px; }

.minis {
    width: 100px;
    padding-top: 2px;
    flex: none;
}

.mini {
    display: flex;
    align-items: center;
    gap: 3px;
    height: 25.500px;
    letter-spacing: -0.25px;
}

/* workspace */
.workspace {
    flex: 1;
    display: flex;
    min-height: 0;
    margin: 0 4px 4px 2px;
}

.sidebar {
    width: 186px;
    flex: none;
    background: #e9e9e9;
    padding: 7px 8px 7px 6px;
    display: flex;
    flex-direction: column;
}

.side-head {
    height: 24px;
    flex: none;
    border: 1px solid #666;
    background: #dedede;
    font-weight: 700;
    line-height: 22px;
    padding-left: 6px;
}

.planes {
    list-style: none;
    margin: 3px 0 0;
    padding: 0;
}

.planes li {
    height: 20px;
    line-height: 20px;
    padding-left: 47px;
}

.planes .group {
    padding-left: 26px;
    font-weight: 600;
    color: #444;
    position: relative;
}

.planes .sel {
    background: #cce8ff;
}

.chev {
    position: absolute;
    left: 7px;
    top: 4px;
    width: 8px;
    height: 8px;
    border-right: 2px solid #444;
    border-bottom: 2px solid #444;
    transform: rotate(45deg);
}

.grip {
    flex: 1;
    position: relative;
}

.grip::after {
    content: "";
    position: absolute;
    left: 73px;
    bottom: 9px;
    width: 14px;
    border-top: 1px dotted #777;
}

.side-tabs {
    display: flex;
    height: 19px;
    padding-top: 3px;
    flex: none;
}

.stab {
    position: relative;
    height: 16px;
    text-align: center;
    line-height: 17px;
}

.stab svg {
    position: absolute;
    inset: 0;
    width: 100%;
    height: 100%;
}

.stab span {
    position: relative;
}

.stab.s1 { width: 78px; }
.stab.s2 { width: 78px; margin-left: -6px; padding-right: 6px; }

.side-panel {
    height: 328px;
    flex: none;
    background: #efefef;
    border: 1px solid #aaa;
    padding: 7px 7px 0;
}

.side-tools {
    height: 21px;
    display: flex;
    align-items: center;
    padding-left: 3px;
    gap: 5px;
}

.tool-sep {
    height: 16px;
    border-left: 1px solid #bbb;
    margin: 0 4px;
}

.tree-box {
    width: 156px;
    height: 292px;
    background: #fff;
    display: flex;
    flex-direction: column;
}

.tree-main {
    height: 276px;
    display: flex;
}

.tree-clip {
    width: 140px;
    overflow: hidden;
}

.tree-list {
    width: 300px;
    margin-left: 12px;
    border-left: 1px dotted #555;
    height: 276px;
    white-space: nowrap;
}

.node, .leaf {
    height: 18px;
    display: flex;
    align-items: center;
}

.exp {
    width: 9px;
    height: 9px;
    margin-left: -4px;
    flex: none;
    border: 1px solid #8a8a8a;
    background: linear-gradient(#000, #000) center / 5px 1px no-repeat, linear-gradient(#000, #000) center / 1px 5px no-repeat, #fff;
}

.exp.open {
    background: linear-gradient(#000, #000) center / 5px 1px no-repeat, #fff;
}

.dash {
    width: 7px;
    border-top: 1px dotted #555;
    flex: none;
}

.dash.long {
    width: 11px;
}

.node span {
    padding: 0 2px;
    margin-left: 4px;
}

.node span.hot {
    background: #eee;
}

.leaf span {
    margin-left: 7px;
}

.tree-sub {
    margin-left: 20px;
    border-left: 1px dotted #555;
    height: 135px;
}

.vscroll {
    width: 16px;
    background: #f6f6f6;
    display: flex;
    flex-direction: column;
    align-items: center;
    justify-content: space-between;
    position: relative;
}

.vthumb {
    width: 16px;
    height: 189px;
    background: #cdcdcd;
    position: absolute;
    top: 30px;
}

.hscroll {
    height: 16px;
    background: #f0f0f0;
    display: flex;
    align-items: center;
    justify-content: space-between;
    position: relative;
    padding: 0 7px;
}

.hthumb {
    position: absolute;
    left: 17px;
    width: 60px;
    height: 16px;
    background: #cdcdcd;
}

.arr {
    width: 6px;
    height: 6px;
    margin: 5px;
    border-top: 2px solid #444;
    border-left: 2px solid #444;
}

.arr.up { transform: rotate(45deg); margin-top: 7px; }
.arr.down { transform: rotate(225deg); margin-bottom: 7px; }
.arr.left { transform: rotate(-45deg); }
.arr.right { transform: rotate(135deg); margin-right: 20px; }

/* main view */
.view {
    width: 1043px;
    display: flex;
    flex-direction: column;
    background: #bebebe;
}

.viewbar, .prev-bar {
    display: flex;
    height: 25px;
    align-items: center;
    background: #ececec;
    border-top: 1px solid #ddd;
}

.vb {
    width: 22px;
    height: 25px;
    display: flex;
    align-items: center;
    justify-content: center;
    flex: none;
}

.vb svg {
    width: 19px;
    height: 19px;
}

.vb.on {
    background: #8ccdfa;
    border: 1px solid #3e9fdf;
}

.vbsep {
    width: 2px;
    height: 22px;
    margin: 0 2px;
    background: #c4c4c4;
    flex: none;
}

.scene {
    display: block;
    width: 1043px;
    height: 749px;
}

.wire {
    fill: none;
    stroke: #7e7e7e;
}

.hatch {
    fill: none;
    stroke: #4a4a4a;
    stroke-width: 1.300;
}

.hatch.warm {
    stroke: #6a3414;
}

.dots {
    fill: none;
    stroke: #6a6a6a;
    stroke-width: 1.300;
    stroke-dasharray: 1.500 3;
}

/* dialogs */
.dlg {
    position: absolute;
    display: flex;
    flex-direction: column;
    border: 1px solid #0d4a94;
}

.dlg.back {
    left: 680px;
    top: 148px;
    width: 539px;
    height: 614px;
    background: #2e7ccc;
    padding: 0 4px 4px 3px;
    border-color: #1e66b8;
}

.dlg.front {
    left: 436px;
    top: 150px;
    width: 752px;
    height: 490px;
    background: #175fa8;
    padding: 0 4px 4px;
}

.dlg-title {
    height: 30px;
    color: #fff;
    font-weight: 600;
    font-size: 12px;
    flex: none;
    position: relative;
    text-align: center;
    line-height: 34px;
    padding-right: 48px;
}

.dlg.back .dlg-title {
    height: 28px;
}

.dlg-title svg {
    position: absolute;
    right: 18px;
    top: 13px;
    width: 11px;
    height: 11px;
    fill: none;
    stroke: #fff;
    stroke-width: 1.200;
}

.dlg.back .dlg-title svg {
    right: 18px;
    top: 12px;
}

.dlg-body {
    flex: 1;
    min-height: 0;
    background: #e9e9e9;
    padding: 6px 6px 0;
    display: flex;
    flex-direction: column;
}

.dlg.back .dlg-body {
    padding: 8px 7px 0 6px;
}

.dlg.back .dlg-foot {
    height: 40px;
    margin: 0 -7px 0 -6px;
    padding-top: 6px;
}

.back-frame {
    flex: 1;
    border: 1px solid #808080;
    padding: 6px 6px 7px;
    margin: 0 0 6px;
    background: #f0f0f0;
}

.back-list {
    height: 100%;
    background: #fff;
    border: 1px solid #808080;
    padding: 107px 1px 0 0;
}

.grid-table {
    width: 100%;
    border: 1px solid #bbb;
    border-bottom-color: #ddd;
}

.gt-head {
    height: 22px;
    line-height: 26px;
    text-align: right;
    padding-right: 3px;
    background: #fff;
}

.gt-row {
    height: 20px;
    background: #fff;
    border-bottom: 1px solid #e2e2e2;
}

.gt-row.hi {
    background: #cce8ff;
}

.dlg-foot {
    height: 38px;
    flex: none;
    margin: 0 -6px;
    background: #dedede;
    border-top: 2px solid #c9c9c9;
    padding: 5px 2px 0 8px;
    display: flex;
    justify-content: space-between;
}

.btn {
    width: 58px;
    height: 25px;
    font: 12px "Noto Sans", sans-serif;
    background: #e1e1e1;
    border: 1px solid #adadad;
    outline: 1px solid #f4f4f4;
    padding: 0;
    margin-right: 6px;
    color: #111;
}

.btn.main {
    width: 68px;
    border: 2px solid #0078d7;
}

.refrow {
    height: 38px;
    flex: none;
    background: #e8e8e8;
    border: 1px solid #808080;
    display: flex;
    align-items: center;
    padding-left: 7px;
}

.refrow label {
    width: 58px;
    flex: none;
}

.field {
    height: 23px;
    background: #fff;
    border: 1px solid #7a7a7a;
    padding: 0 5px;
    font: 11.5px "Noto Sans", sans-serif;
    outline: none;
    color: #111;
    display: flex;
    align-items: center;
}

.field.ref { width: 352px; }
.field.abbr { width: 231px; margin-left: 12px; }

.code {
    margin-left: 12px;
    padding-bottom: 5px;
}

.selected {
    background: #0078d7;
    color: #fff;
    line-height: 15px;
}

.mainrow {
    height: 358px;
    flex: none;
    margin: 7px 0;
    display: flex;
    gap: 6px;
}

.props {
    width: 310px;
    background: #f8f8f8;
    border: 1px solid #808080;
    padding: 9px 9px 0;
}

.radios {
    display: flex;
    height: 18px;
    align-items: center;
}

.rad {
    display: flex;
    align-items: center;
    gap: 3px;
    white-space: nowrap;
}

.rad.r1 { width: 72px; }
.rad.r2 { width: 74px; }
.rad.bold { font-weight: 700; }

.rad input {
    appearance: none;
    width: 13px;
    height: 13px;
    margin: 0;
    border: 1px solid #333;
    border-radius: 50%;
    background: #fff;
}

.rad input:checked {
    background: radial-gradient(circle, #222 0 3.500px, #fff 4px);
}

.prop {
    display: flex;
    align-items: center;
    height: 23px;
    margin-top: 6px;
}

.radios + .prop {
    margin-top: 10px;
}

.prop span {
    width: 206px;
}

.prop input {
    width: 63px;
    height: 23px;
    border: 1px solid #7a7a7a;
    background: #fff;
    text-align: right;
    padding: 0 5px;
    font: 11.5px "Noto Sans", sans-serif;
    color: #111;
    outline: none;
}

.prop em {
    font-style: normal;
    margin-left: 6px;
}

.preview {
    width: 414px;
    background: #f8f8f8;
    border: 1px solid #808080;
    display: flex;
    flex-direction: column;
}

.prev-head {
    height: 21px;
    background: #cfcfcf;
    border-bottom: 1px solid #777;
    line-height: 20px;
    padding-left: 6px;
    flex: none;
}

.prev-bar {
    background: none;
    border: 0;
    height: 34px;
    padding-left: 6px;
    flex: none;
}

.box3d {
    display: block;
    width: 412px;
    height: 301px;
}
```
